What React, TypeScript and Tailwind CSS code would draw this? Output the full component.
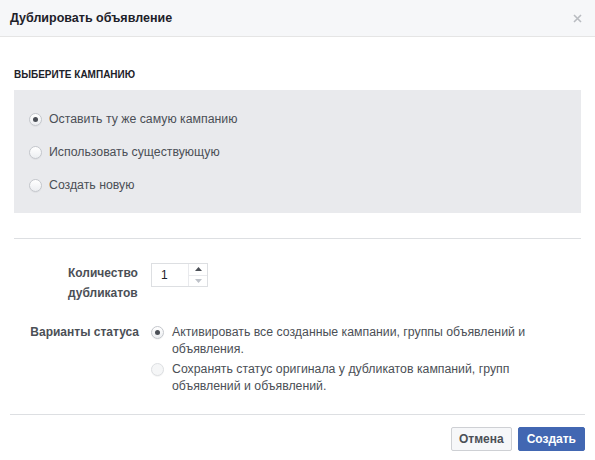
import { useState } from 'react';

function Radio({ checked, disabled }: { checked: boolean; disabled?: boolean }) {
  return (
    <span
      className={`flex h-[13px] w-[13px] shrink-0 items-center justify-center rounded-full border ${
        disabled ? 'border-[#dddfe2] bg-[#f5f6f7]' : 'border-[#c4c7cc] bg-gradient-to-b from-white to-[#eceef1]'
      } shadow-[0_1px_0_rgba(0,0,0,0.04)]`}
    >
      {checked && <span className="h-[5px] w-[5px] rounded-full bg-[#4b4f56]" />}
    </span>
  );
}

export default function App() {
  const [campaign, setCampaign] = useState(0);
  const [status, setStatus] = useState(0);
  const [count, setCount] = useState(1);

  const campaigns = ['Оставить ту же самую кампанию', 'Использовать существующую', 'Создать новую'];

  return (
    <div className="h-[460px] w-[595px] bg-white font-['Liberation_Sans',Arial,sans-serif] text-[#4b4f56]">
      {/* Header */}
      <div className="flex h-[37px] items-center justify-between border-b border-[#e5e5e5] bg-[#f6f7f9] pl-[10px] pr-[10px]">
        <h1 className="text-[12.5px] font-bold text-[#1d2129]">Дублировать объявление</h1>
        <button className="flex h-4 w-4 items-center justify-center text-[#b9bcc1]">
          <svg width="9" height="9" viewBox="0 0 9 9">
            <path d="M1 1L8 8M8 1L1 8" stroke="currentColor" strokeWidth="1.6" />
          </svg>
        </button>
      </div>

      <div className="px-[14px]">
        <div className="pt-[30px] pb-[8px] text-[10px] font-bold uppercase text-[#1d2129]">Выберите кампанию</div>

        {/* Campaign choice */}
        <div className="flex h-[123px] flex-col gap-[17px] bg-[#e9eaed] pl-[15px] pt-[21px]">
          {campaigns.map((c, i) => (
            <label key={c} className="flex h-4 cursor-pointer items-center gap-[7px] text-[12.3px]" onClick={() => setCampaign(i)}>
              <Radio checked={campaign === i} />
              <span>{c}</span>
            </label>
          ))}
        </div>

        <div className="mt-[25px] border-t border-[#dddfe2]" />

        {/* Quantity */}
        <div className="mt-[24px] flex gap-[12px]">
          <div className="w-[125px] text-[12px] leading-[20px] font-bold">
            <div className="ml-auto w-[71px]">Количество дубликатов</div>
          </div>
          <div className="flex h-[24px] w-[57px] border border-[#dddfe2] bg-white">
            <div className="flex flex-1 items-center pl-[9px] text-[12px] text-[#1d2129]">{count}</div>
            <div className="flex w-[19px] flex-col border-l border-[#e9eaed]">
              <button className="flex flex-1 items-center justify-center" onClick={() => setCount(count + 1)}>
                <svg width="7" height="4" viewBox="0 0 7 4"><path d="M0 4L3.5 0L7 4Z" fill="#4b4f56" /></svg>
              </button>
              <button className="flex flex-1 items-center justify-center border-t border-[#e9eaed]" onClick={() => setCount(Math.max(1, count - 1))}>
                <svg width="7" height="4" viewBox="0 0 7 4"><path d="M0 0L3.5 4L7 0Z" fill="#bec2c9" /></svg>
              </button>
            </div>
          </div>
        </div>

        {/* Status */}
        <div className="mt-[21px] flex gap-[12px]">
          <div className="w-[125px] text-right text-[12px] leading-[17px] font-bold">Варианты статуса</div>
          <div className="flex flex-col gap-[3px] text-[12.3px] leading-[17px]">
            <label className="flex cursor-pointer gap-[8px]" onClick={() => setStatus(0)}>
              <span className="pt-[2px]"><Radio checked={status === 0} /></span>
              <span className="w-[370px]">Активировать все созданные кампании, группы объявлений и объявления.</span>
            </label>
            <label className="flex cursor-pointer gap-[8px]">
              <span className="pt-[2px]"><Radio checked={status === 1} disabled /></span>
              <span className="w-[350px]">Сохранять статус оригинала у дубликатов кампаний, групп объявлений и объявлений.</span>
            </label>
          </div>
        </div>
      </div>

      {/* Footer */}
      <div className="mx-[10px] mt-[19px] border-t border-[#dddfe2]" />
      <div className="flex justify-end gap-[6px] px-[10px] pt-[12px]">
        <button className="h-[24px] rounded-[2px] border border-[#ced0d4] bg-[#f6f7f9] px-[7px] text-[12px] font-bold text-[#4b4f56]">
          Отмена
        </button>
        <button className="h-[24px] rounded-[2px] border border-[#4267b2] bg-[#4267b2] px-[8px] text-[12px] font-bold text-white">
          Создать
        </button>
      </div>
    </div>
  );
}
